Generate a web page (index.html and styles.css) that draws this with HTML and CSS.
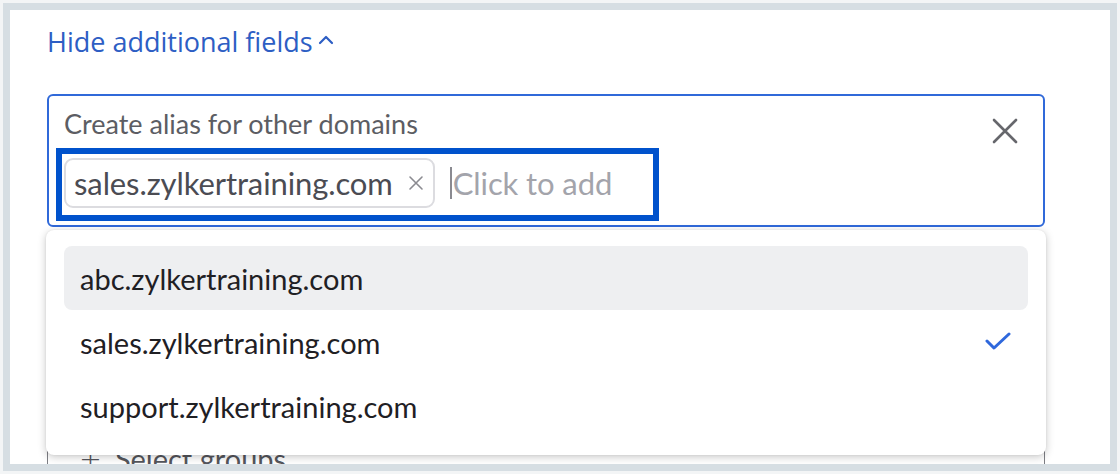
FILE: index.html
```html
<!DOCTYPE html>
<html>
<head>
<meta charset="utf-8">
<link rel="stylesheet" href="styles.css">
</head>
<body>
<div class="frame">
  <div class="content">
    <button class="toggle">Hide additional fields<svg class="chev" width="18" height="12" viewBox="0 0 18 12"><path d="M3 10 L9 4 L15 10" fill="none" stroke="#2d5ec4" stroke-width="2.2" stroke-linecap="round" stroke-linejoin="round"/></svg></button>
    <div class="field-wrap">
      <div class="field active">
        <div class="field-head">
          <span class="label">Create alias for other domains</span>
          <svg class="close" width="26" height="26" viewBox="0 0 26 26"><path d="M2 2 L24 24 M24 2 L2 24" stroke="#66676c" stroke-width="2.6" stroke-linecap="round"/></svg>
        </div>
        <div class="tags">
          <span class="chip">sales.zylkertraining.com<svg class="chip-x" width="16" height="16" viewBox="0 0 16 16"><path d="M2 2 L14 14 M14 2 L2 14" stroke="#8b8b91" stroke-width="1.6" stroke-linecap="round"/></svg></span>
          <span class="input"><span class="caret"></span>Click to add</span>
        </div>
        <div class="annot"></div>
      </div>
      <div class="field next">
        <span class="add">+</span><span class="add-text">Select groups</span>
      </div>
      <div class="dropdown">
        <div class="item hover">abc.zylkertraining.com</div>
        <div class="item">sales.zylkertraining.com<svg class="check" width="26" height="20" viewBox="0 0 26 20"><path d="M2 9 L9 16 L24 2" fill="none" stroke="#2f68dc" stroke-width="3" stroke-linecap="round" stroke-linejoin="round"/></svg></div>
        <div class="item">support.zylkertraining.com</div>
      </div>
    </div>
  </div>
</div>
</body>
</html>
```
FILE: styles.css
```css
* { box-sizing: border-box; }
html, body { margin: 0; padding: 0; }
body {
  width: 1120px;
  height: 474px;
  background: #f3f5f6;
  padding: 3px;
  font-family: "Lato", "Liberation Sans", sans-serif;
  overflow: hidden;
}
.frame {
  width: 1114px;
  height: 468px;
  border: 7px solid #d6dee3;
  background: #ffffff;
  overflow: hidden;
}
.content {
  padding: 15px 0 0 37px;
  width: 1100px;
}
.toggle {
  display: flex;
  align-items: center;
  gap: 4px;
  border: 0;
  background: none;
  padding: 0;
  font-family: "Open Sans", "Noto Sans", sans-serif;
  font-size: 27px;
  line-height: 34px;
  color: #2d5ec4;
}
.chev { margin-top: -6px; }
.field-wrap {
  position: relative;
  margin-top: 35px;
  width: 998px;
}
.field {
  border-radius: 6px;
}
.field.active {
  position: relative;
  border: 2px solid #3069d9;
  padding: 12px 15px 17px 15px;
}
.field-head {
  display: flex;
  justify-content: space-between;
  align-items: flex-start;
  height: 40px;
}
.label {
  font-size: 27px;
  line-height: 32px;
  color: #5c5d63;
}
.close { margin: 10px 10px 0 0; }
.tags {
  display: flex;
  align-items: center;
  gap: 15px;
  margin-top: 10px;
}
.chip {
  display: flex;
  align-items: center;
  gap: 15px;
  height: 50px;
  padding: 0 9px 0 8px;
  border: 2px solid #dcdce0;
  border-radius: 9px;
  font-size: 31px;
  letter-spacing: -0.1px;
  color: #4b4c53;
}
.input {
  display: flex;
  align-items: center;
  font-size: 31px;
  letter-spacing: -0.1px;
  color: #a3a4ab;
}
.caret {
  width: 2px;
  height: 32px;
  background: #8a8a90;
  margin-right: 1px;
}
.annot {
  position: absolute;
  left: 7px;
  top: 52px;
  width: 603px;
  height: 73px;
  border: 6px solid #0052cc;
}
.field.next {
  margin-top: 22px;
  border: 1px solid #7d7e84;
  padding: 186px 0 40px 32px;
  display: flex;
  align-items: center;
  gap: 14px;
  font-size: 29px;
  color: #55565c;
}
.add { font-size: 36px; font-weight: 300; }
.dropdown {
  position: absolute;
  left: -1px;
  top: 136px;
  width: 1000px;
  height: 225px;
  background: #ffffff;
  border-radius: 8px;
  box-shadow: 0 2px 8px rgba(0, 0, 0, 0.22), 0 0 2px rgba(0, 0, 0, 0.08);
  padding: 16px 18px;
}
.item {
  display: flex;
  align-items: center;
  justify-content: space-between;
  height: 64px;
  padding: 0 17px 0 16px;
  border-radius: 8px;
  font-size: 29px;
  color: #1f2024;
}
.item.hover { background: #eeeff1; }
```
